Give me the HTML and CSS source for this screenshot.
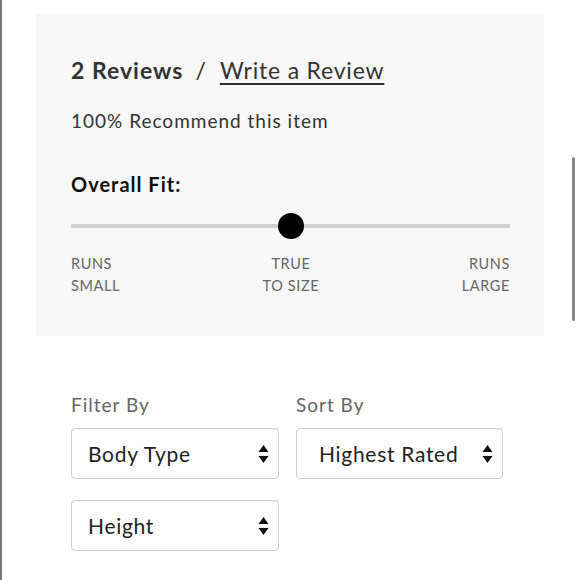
FILE: index.html
```html
<!DOCTYPE html>
<html>
<head>
<meta charset="utf-8">
<link rel="stylesheet" href="styles.css">
</head>
<body>
<div class="page">
  <section class="panel">
    <div class="title">
      <span class="count">2 Reviews</span>
      <span class="slash">/</span>
      <a class="write" href="#">Write a Review</a>
    </div>
    <div class="recommend">100% Recommend this item</div>
    <div class="fit-label">Overall Fit:</div>
    <div class="slider">
      <div class="track"></div>
      <div class="knob"></div>
    </div>
    <div class="scale">
      <div class="scale-item left">RUNS<br>SMALL</div>
      <div class="scale-item center">TRUE<br>TO SIZE</div>
      <div class="scale-item right">RUNS<br>LARGE</div>
    </div>
  </section>
  <section class="controls">
    <div class="col">
      <div class="ctrl-label">Filter By</div>
      <div class="select"><span class="sel-text">Body Type</span><span class="arrows"><svg width="11" height="20" viewBox="0 0 11 20"><path d="M5.5 1 L10.5 8 L0.5 8 Z" fill="#111"/><path d="M0.5 12 L10.5 12 L5.5 19 Z" fill="#111"/></svg></span></div>
      <div class="select second"><span class="sel-text">Height</span><span class="arrows"><svg width="11" height="20" viewBox="0 0 11 20"><path d="M5.5 1 L10.5 8 L0.5 8 Z" fill="#111"/><path d="M0.5 12 L10.5 12 L5.5 19 Z" fill="#111"/></svg></span></div>
    </div>
    <div class="col sort">
      <div class="ctrl-label">Sort By</div>
      <div class="select wide-pad"><span class="sel-text">Highest Rated</span><span class="arrows"><svg width="11" height="20" viewBox="0 0 11 20"><path d="M5.5 1 L10.5 8 L0.5 8 Z" fill="#111"/><path d="M0.5 12 L10.5 12 L5.5 19 Z" fill="#111"/></svg></span></div>
    </div>
  </section>
  <div class="scrollbar"></div>
</div>
</body>
</html>
```
FILE: styles.css
```css
html, body {
  margin: 0;
  padding: 0;
  background: #fff;
}
body {
  font-family: Lato, "Open Sans", Arial, sans-serif;
  color: #333;
}
.page {
  position: relative;
  width: 580px;
  height: 580px;
  box-sizing: border-box;
  border-left: 2px solid #777;
  overflow: hidden;
}
.panel {
  margin: 14px 0 0 34px;
  width: 508px;
  height: 322px;
  box-sizing: border-box;
  background: #f7f7f7;
  padding: 41px 34px 0 35px;
}
.title {
  height: 30px;
  line-height: 30px;
  font-size: 23px;
  color: #333;
  display: flex;
  align-items: center;
}
.count {
  font-weight: 700;
  letter-spacing: 1px;
}
.slash {
  margin: 0 14px 0 12px;
}
.write {
  color: #333;
  letter-spacing: 0.8px;
  text-decoration: underline;
  text-underline-offset: 4px;
  text-decoration-thickness: 2px;
}
.recommend {
  margin-top: 23px;
  height: 26px;
  line-height: 26px;
  font-size: 19px;
  letter-spacing: 1px;
  color: #333;
}
.fit-label {
  margin-top: 37px;
  height: 26px;
  line-height: 26px;
  font-size: 20px;
  letter-spacing: 1px;
  font-weight: 700;
  color: #111;
}
.slider {
  margin-top: 16px;
  position: relative;
  width: 439px;
  height: 26px;
  display: flex;
  align-items: center;
  justify-content: center;
}
.track {
  position: absolute;
  left: 0;
  right: 0;
  top: 11px;
  height: 4px;
  background: #cfcfcf;
}
.knob {
  position: relative;
  width: 26px;
  height: 26px;
  border-radius: 50%;
  background: #000;
}
.scale {
  margin-top: 14px;
  width: 439px;
  display: flex;
  justify-content: space-between;
  font-size: 14.5px;
  line-height: 22px;
  letter-spacing: 0.6px;
  color: #666;
}
.scale-item.center {
  text-align: center;
}
.scale-item.right {
  text-align: right;
}
.controls {
  margin: 57px 0 0 69px;
  display: flex;
  gap: 17px;
}
.col {
  width: 208px;
  display: flex;
  flex-direction: column;
}
.col.sort {
  width: 207px;
}
.ctrl-label {
  height: 24px;
  line-height: 24px;
  font-size: 19px;
  letter-spacing: 1px;
  color: #666;
  margin-bottom: 11px;
}
.select {
  height: 51px;
  box-sizing: border-box;
  border: 1.5px solid #ccc;
  border-radius: 4px;
  background: #fff;
  display: flex;
  align-items: center;
  justify-content: space-between;
  padding: 0 9px 0 16px;
  font-size: 21px;
  letter-spacing: 0.7px;
  color: #222;
}
.select.wide-pad {
  padding-left: 22px;
}
.select.second {
  margin-top: 21px;
}
.arrows {
  display: flex;
  align-items: center;
}
.arrows svg {
  display: block;
}
.scrollbar {
  position: absolute;
  left: 570px;
  top: 157px;
  width: 3px;
  height: 164px;
  border-radius: 2px;
  background: #888;
}
```
